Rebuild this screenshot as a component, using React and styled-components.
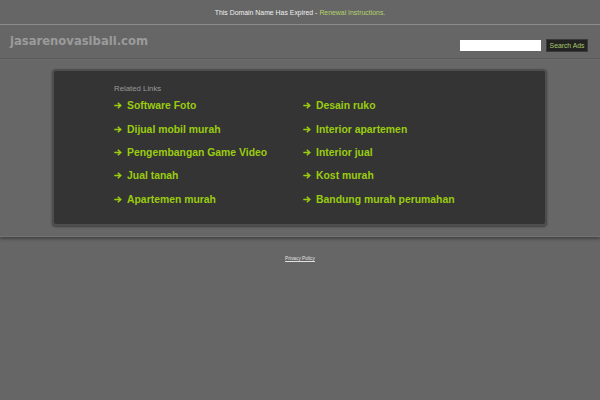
import React from "react";
import styled, { createGlobalStyle } from "styled-components";

const Global = createGlobalStyle`
  html, body { margin: 0; padding: 0; background: #666; }
  body { font-family: "Liberation Sans", Arial, sans-serif; width: 600px; height: 400px; overflow: hidden; }
`;

const TopBar = styled.div`
  height: 24px;
  display: flex;
  align-items: center;
  justify-content: center;
  font-size: 6.9px;
  color: #f0f0f0;
  border-bottom: 1px solid #8c8c8c;
`;

const TopLink = styled.a`
  color: #b4d26a;
  text-decoration: none;
  margin-left: 2px;
`;

const Header = styled.div`
  height: 33px;
  display: flex;
  align-items: flex-start;
  justify-content: space-between;
  padding: 0 13px 0 10px;
  border-bottom: 1px solid #5b5b5b;
  box-shadow: 0 1px 0 #6e6e6e;
`;

const Logo = styled.div`
  font-family: "DejaVu Sans", Verdana, sans-serif;
  font-weight: bold;
  font-size: 11.6px;
  color: #9b9b9b;
  margin-top: 9px;
`;

const Search = styled.form`
  display: flex;
  align-items: center;
  gap: 6px;
  margin-top: 15px;
`;

const SearchInput = styled.div`
  width: 81px;
  height: 11px;
  background: #fff;
`;

const SearchButton = styled.div`
  height: 11px;
  width: 40px;
  background: #222;
  color: #a8c86a;
  font-size: 6.8px;
  display: flex;
  align-items: center;
  justify-content: center;
  box-shadow: 0 0 0 1px #3a3a3a;
`;

const Band = styled.div`
  margin-top: 1px;
  padding: 9px 0 10px;
  background: #676767;
  box-shadow: 0 2px 3px rgba(0, 0, 0, 0.35);
  border-bottom: 1px solid #747474;
`;

const Panel = styled.div`
  margin: 0 53px 0 52px;
  height: 157px;
  box-sizing: border-box;
  background: #343434;
  border: 2px solid #4e4e4e;
  border-radius: 4px;
  box-shadow: 0 1px 2px rgba(0, 0, 0, 0.4);
  padding: 12px 0 0 60px;
`;

const Title = styled.div`
  font-size: 7.8px;
  color: #9a9a9a;
  height: 11px;
  line-height: 11px;
`;

const Links = styled.div`
  display: grid;
  grid-template-columns: 189px 1fr;
  grid-auto-rows: 23.4px;
`;

const LinkItem = styled.a`
  display: flex;
  align-items: center;
  font-size: 10.4px;
  font-weight: bold;
  color: #9acc10;
  text-decoration: none;
  white-space: nowrap;
`;

const ArrowSvg = styled.svg`
  width: 8px;
  height: 7px;
  margin: 0 5px 0 0;
  flex: none;
`;

const Footer = styled.div`
  display: flex;
  justify-content: center;
  padding-top: 19px;
`;

const Privacy = styled.a`
  font-size: 4.8px;
  color: #e0e0e0;
  text-decoration: underline;
`;

const Arrow = () => (
  <ArrowSvg viewBox="0 0 8 7">
    <path d="M0.3 3.5H6.6M3.8 0.7L6.8 3.5L3.8 6.3" fill="none" stroke="currentColor" strokeWidth="1.5" />
  </ArrowSvg>
);

const left = ["Software Foto", "Dijual mobil murah", "Pengembangan Game Video", "Jual tanah", "Apartemen murah"];
const right = ["Desain ruko", "Interior apartemen", "Interior jual", "Kost murah", "Bandung murah perumahan"];

export default function App() {
  const items = [];
  left.forEach((l, i) => {
    items.push(l, right[i]);
  });
  return (
    <>
      <Global />
      <TopBar>
        This Domain Name Has Expired - <TopLink href="#">Renewal Instructions.</TopLink>
      </TopBar>
      <Header>
        <Logo>jasarenovasibali.com</Logo>
        <Search>
          <SearchInput />
          <SearchButton>Search Ads</SearchButton>
        </Search>
      </Header>
      <Band>
        <Panel>
          <Title>Related Links</Title>
          <Links>
            {items.map((t) => (
              <LinkItem key={t} href="#">
                <Arrow />
                {t}
              </LinkItem>
            ))}
          </Links>
        </Panel>
      </Band>
      <Footer>
        <Privacy href="#">Privacy Policy</Privacy>
      </Footer>
    </>
  );
}
